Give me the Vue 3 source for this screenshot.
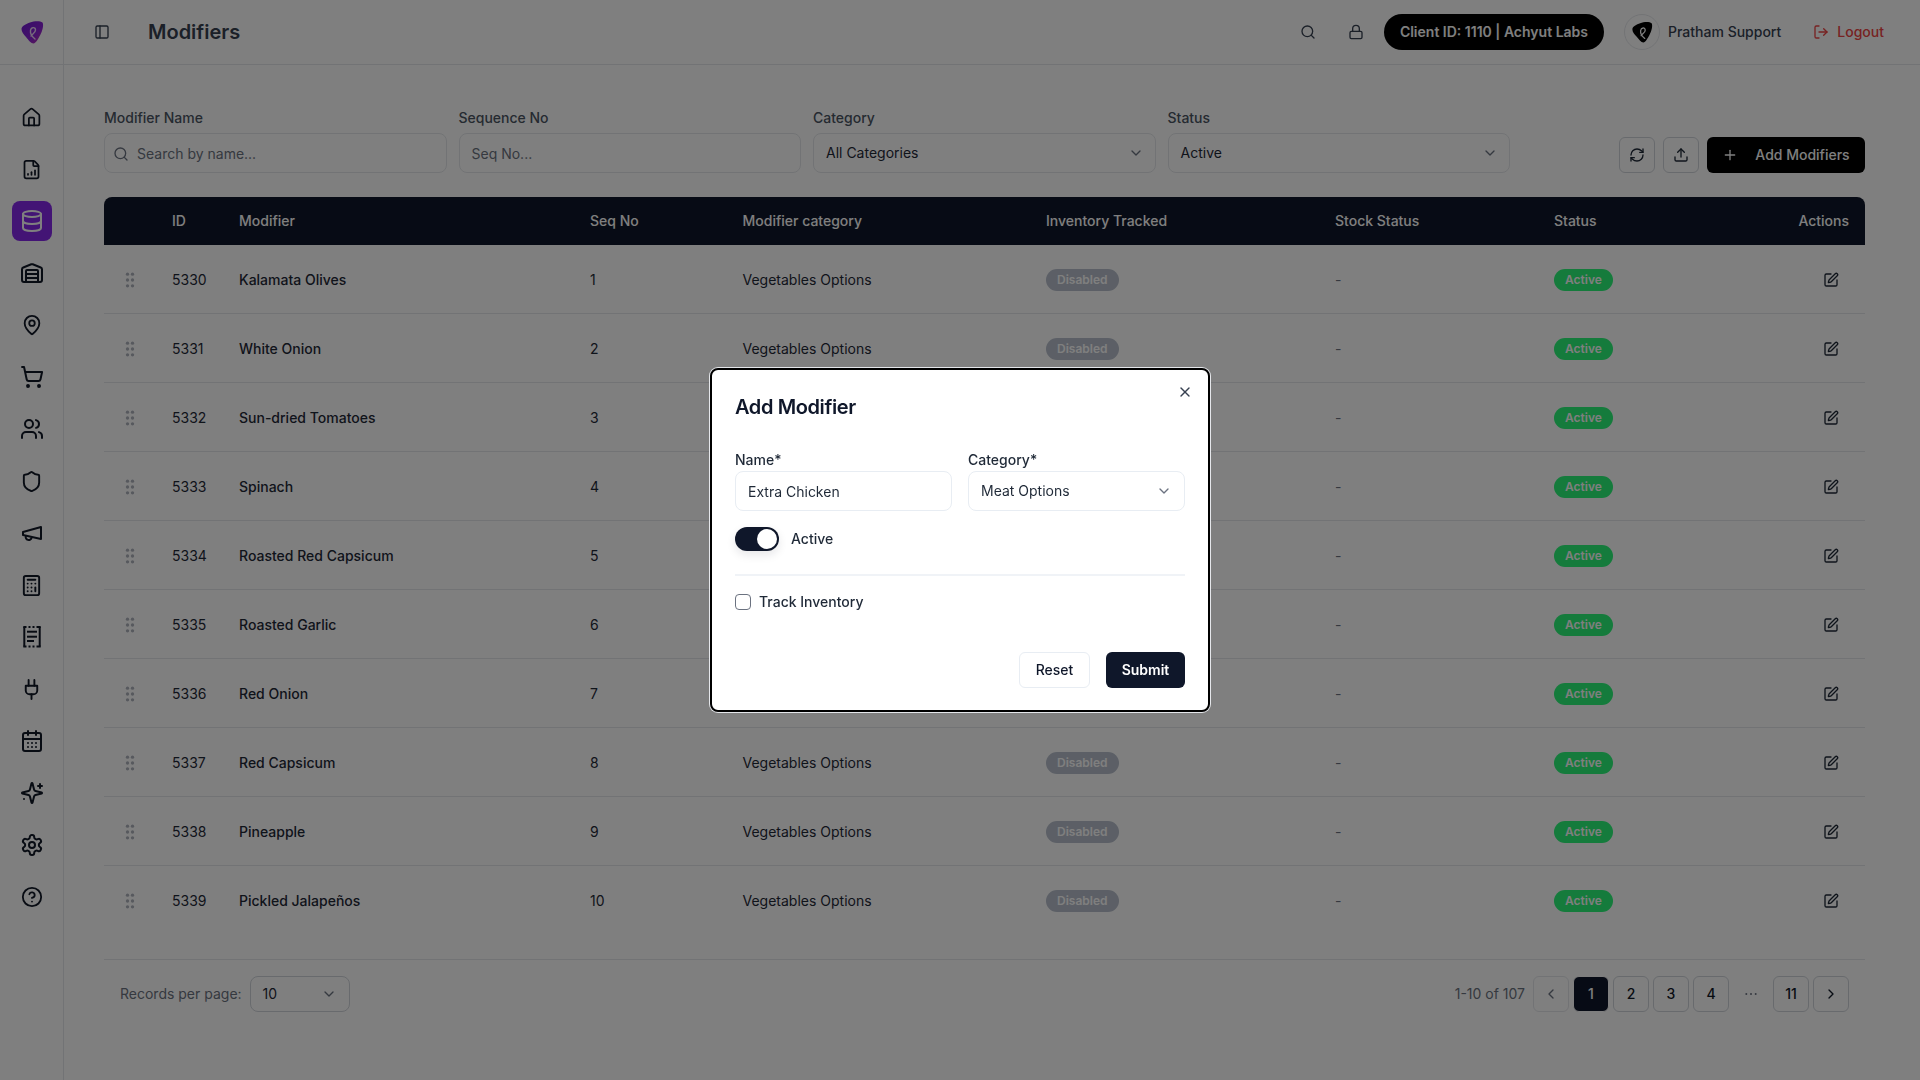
<script setup>
const navIcons = [
  { id: 'home', size: 21, paths: ['M15 21v-8a1 1 0 0 0-1-1h-4a1 1 0 0 0-1 1v8', 'M3 10a2 2 0 0 1 .709-1.528l7-5.999a2 2 0 0 1 2.582 0l7 5.999A2 2 0 0 1 21 10v9a2 2 0 0 1-2 2H5a2 2 0 0 1-2-2z'] },
  { id: 'report', size: 21, paths: ['M6 22a2 2 0 0 1-2-2V4a2 2 0 0 1 2-2h8a2.4 2.4 0 0 1 1.704.706l3.588 3.588A2.4 2.4 0 0 1 20 8v12a2 2 0 0 1-2 2z', 'M14 2v5a1 1 0 0 0 1 1h5', 'M8 18v-1', 'M12 18v-3', 'M16 18v-5'] },
  { id: 'database', size: 24, active: true, paths: ['M3 5a9 3 0 1 0 18 0a9 3 0 1 0-18 0', 'M3 5V19A9 3 0 0 0 21 19V5', 'M3 12A9 3 0 0 0 21 12'] },
  { id: 'warehouse', size: 24, paths: ['M18 21V10a1 1 0 0 0-1-1H7a1 1 0 0 0-1 1v11', 'M22 19a2 2 0 0 1-2 2H4a2 2 0 0 1-2-2V8.35a2 2 0 0 1 1.26-1.86l8-3.2a2 2 0 0 1 1.48 0l8 3.2A2 2 0 0 1 22 8.35z', 'M6 13h12', 'M6 17h12'] },
  { id: 'pin', size: 22, paths: ['M20 10c0 4.993-5.539 10.193-7.399 11.799a1 1 0 0 1-1.202 0C9.539 20.193 4 14.993 4 10a8 8 0 0 1 16 0', 'M9 10a3 3 0 1 0 6 0a3 3 0 1 0-6 0'] },
  { id: 'cart', size: 24, paths: ['M7 21a1 1 0 1 0 2 0a1 1 0 1 0-2 0', 'M18 21a1 1 0 1 0 2 0a1 1 0 1 0-2 0', 'M2.05 2.05h2l2.66 12.42a2 2 0 0 0 2 1.58h9.78a2 2 0 0 0 1.95-1.57l1.65-7.43H5.12'] },
  { id: 'users', size: 24, paths: ['M16 21v-2a4 4 0 0 0-4-4H6a4 4 0 0 0-4 4v2', 'M16 3.128a4 4 0 0 1 0 7.744', 'M22 21v-2a4 4 0 0 0-3-3.87', 'M5 7a4 4 0 1 0 8 0a4 4 0 1 0-8 0'] },
  { id: 'shield', size: 23, paths: ['M20 13c0 5-3.5 7.5-7.66 8.95a1 1 0 0 1-.67-.01C7.5 20.5 4 18 4 13V6a1 1 0 0 1 1-1c2 0 4.5-1.2 6.24-2.72a1.17 1.17 0 0 1 1.52 0C14.51 3.81 17 5 19 5a1 1 0 0 1 1 1z'] },
  { id: 'megaphone', size: 24, paths: ['M3 11l18-5v12L3 14v-3z', 'M11.6 16.8a3 3 0 1 1-5.8-1.6'] },
  { id: 'calculator', size: 23, paths: ['M6 2h12a2 2 0 0 1 2 2v16a2 2 0 0 1-2 2H6a2 2 0 0 1-2-2V4a2 2 0 0 1 2-2z', 'M8 6h8', 'M16 14v4', 'M16 10h.01', 'M12 10h.01', 'M8 10h.01', 'M12 14h.01', 'M8 14h.01', 'M12 18h.01', 'M8 18h.01'] },
  { id: 'receipt', size: 24, square: true, paths: ['M4.3 2v19.5', 'M19.7 2v19.5', 'M3.3 2h3.2M8.5 2h2M12.5 2h2M16.5 2h4.2', 'M3.3 21.5h3.2M8.5 21.5h2M12.5 21.5h2M16.5 21.5h4.2', 'M7 6.7h10', 'M7 11.7h10', 'M7 16h7'] },
  { id: 'plug', size: 23, paths: ['M12 22v-5', 'M9 8V2', 'M15 8V2', 'M18 8v5a4 4 0 0 1-4 4h-4a4 4 0 0 1-4-4V8Z'] },
  { id: 'calendar', size: 24, paths: ['M8 2v4', 'M16 2v4', 'M5 4h14a2 2 0 0 1 2 2v14a2 2 0 0 1-2 2H5a2 2 0 0 1-2-2V6a2 2 0 0 1 2-2z', 'M3 10h18', 'M8 14h.01', 'M12 14h.01', 'M16 14h.01', 'M8 18h.01', 'M12 18h.01', 'M16 18h.01'] },
  { id: 'sparkles', size: 24, paths: ['M9.937 15.5A2 2 0 0 0 8.5 14.063l-6.135-1.582a.5.5 0 0 1 0-.962L8.5 9.936A2 2 0 0 0 9.937 8.5l1.582-6.135a.5.5 0 0 1 .963 0L14.063 8.5A2 2 0 0 0 15.5 9.937l6.135 1.581a.5.5 0 0 1 0 .964L15.5 14.063a2 2 0 0 0-1.437 1.437l-1.582 6.135a.5.5 0 0 1-.963 0z', 'M20 3v4', 'M22 5h-4', 'M4 18h.01'] },
  { id: 'settings', size: 24, paths: ['M12.22 2h-.44a2 2 0 0 0-2 2v.18a2 2 0 0 1-1 1.73l-.43.25a2 2 0 0 1-2 0l-.15-.08a2 2 0 0 0-2.73.73l-.22.38a2 2 0 0 0 .73 2.73l.15.1a2 2 0 0 1 1 1.72v.51a2 2 0 0 1-1 1.74l-.15.09a2 2 0 0 0-.73 2.73l.22.38a2 2 0 0 0 2.73.73l.15-.08a2 2 0 0 1 2 0l.43.25a2 2 0 0 1 1 1.73V20a2 2 0 0 0 2 2h.44a2 2 0 0 0 2-2v-.18a2 2 0 0 1 1-1.73l.43-.25a2 2 0 0 1 2 0l.15.08a2 2 0 0 0 2.73-.73l.22-.39a2 2 0 0 0-.73-2.73l-.15-.08a2 2 0 0 1-1-1.74v-.5a2 2 0 0 1 1-1.74l.15-.09a2 2 0 0 0 .73-2.73l-.22-.38a2 2 0 0 0-2.73-.73l-.15.08a2 2 0 0 1-2 0l-.43-.25a2 2 0 0 1-1-1.73V4a2 2 0 0 0-2-2z', 'M9 12a3 3 0 1 0 6 0a3 3 0 1 0-6 0'] },
  { id: 'help', size: 22, paths: ['M2 12a10 10 0 1 0 20 0a10 10 0 1 0-20 0', 'M9.09 9a3 3 0 0 1 5.83 1c0 2-3 3-3 3', 'M12 17h.01'] },
]

const filters = [
  { label: 'Modifier Name', placeholder: 'Search by name...', search: true },
  { label: 'Sequence No', placeholder: 'Seq No...' },
  { label: 'Category', value: 'All Categories' },
  { label: 'Status', value: 'Active' },
]

const columns = ['', 'ID', 'Modifier', 'Seq No', 'Modifier category', 'Inventory Tracked', 'Stock Status', 'Status', 'Actions']

const names = [
  'Kalamata Olives', 'White Onion', 'Sun-dried Tomatoes', 'Spinach', 'Roasted Red Capsicum',
  'Roasted Garlic', 'Red Onion', 'Red Capsicum', 'Pineapple', 'Pickled Jalapeños',
]
const rows = names.map((name, i) => ({ id: 5330 + i, name, seq: i + 1 }))

const pages = ['1', '2', '3', '4', '...', '11']
const pickPath = 'M1.5 9C1.5 6 6 4 10 2.5C14 1 20 .5 22.5 2.5C24 5 22.5 11 20 15.5C18 19 16 23 13.5 23.5C11 23.5 8.5 20 6 17C3.5 14 1.5 12 1.5 9Z'
const loopPath = 'M15 19C12.5 17 10 14 10.5 10.5C11 7 15.5 6.5 15.5 10C15.5 13 12 14 11 16'
</script>

<template>
  <div class="page">
    <aside class="sidebar">
      <div class="logo-wrap">
        <svg viewBox="0 0 24 24" width="24" height="24">
          <defs>
            <linearGradient id="pickGrad" x1="0" y1="0" x2="1" y2="1">
              <stop offset="0" stop-color="#6f1ad0" />
              <stop offset="0.6" stop-color="#8a22d8" />
              <stop offset="1" stop-color="#c23aa6" />
            </linearGradient>
          </defs>
          <path :d="pickPath" fill="url(#pickGrad)" />
          <path :d="loopPath" fill="none" stroke="#ecd6f7" stroke-width="1.4" stroke-linecap="round" />
        </svg>
      </div>
      <nav class="nav">
        <a v-for="icon in navIcons" :key="icon.id" class="nav-item" :class="{ active: icon.active }">
          <svg :width="icon.size" :height="icon.size" viewBox="0 0 24 24" class="ic" :class="{ square: icon.square }">
            <path v-for="d in icon.paths" :key="d" :d="d" />
          </svg>
        </a>
      </nav>
    </aside>

    <div class="main">
      <header class="topbar">
        <button class="panel-btn">
          <svg width="16" height="16" viewBox="0 0 24 24" class="ic"><rect x="3" y="3" width="18" height="18" rx="2" /><path d="M9 3v18" /></svg>
        </button>
        <h1>Modifiers</h1>
        <div class="top-right">
          <button class="top-icon">
            <svg width="16" height="16" viewBox="0 0 24 24" class="ic"><circle cx="11" cy="11" r="8" /><path d="m21 21-4.3-4.3" /></svg>
          </button>
          <button class="top-icon lock">
            <svg width="16" height="16" viewBox="0 0 24 24" class="ic"><rect x="3" y="11" width="18" height="11" rx="2" /><path d="M7 11V7a5 5 0 0 1 10 0v4" /></svg>
          </button>
          <div class="client-pill">Client ID: 1110 | Achyut Labs</div>
          <div class="avatar">
            <svg viewBox="0 0 24 24" width="22" height="22">
              <path :d="pickPath" fill="#000" />
              <path :d="loopPath" fill="none" stroke="#fff" stroke-width="1.4" stroke-linecap="round" />
            </svg>
          </div>
          <span class="user-name">Pratham Support</span>
          <a class="logout">
            <svg width="16" height="16" viewBox="0 0 24 24" class="ic"><path d="M9 21H5a2 2 0 0 1-2-2V5a2 2 0 0 1 2-2h4" /><path d="m16 17 5-5-5-5" /><path d="M21 12H9" /></svg>
            Logout
          </a>
        </div>
      </header>

      <main class="content">
        <section class="filters">
          <div v-for="f in filters" :key="f.label" class="filter">
            <label>{{ f.label }}</label>
            <div v-if="f.placeholder" class="field" :class="{ 'with-icon': f.search }">
              <svg v-if="f.search" width="16" height="16" viewBox="0 0 24 24" class="ic search-ic"><circle cx="11" cy="11" r="8" /><path d="m21 21-4.3-4.3" /></svg>
              <span class="placeholder">{{ f.placeholder }}</span>
            </div>
            <div v-else class="field select">
              <span>{{ f.value }}</span>
              <svg width="16" height="16" viewBox="0 0 24 24" class="ic chevron"><path d="m6 9 6 6 6-6" /></svg>
            </div>
          </div>
          <div class="filter-actions">
            <button class="square-btn">
              <svg width="16" height="16" viewBox="0 0 24 24" class="ic"><path d="M3 12a9 9 0 0 1 9-9 9.75 9.75 0 0 1 6.74 2.74L21 8" /><path d="M21 3v5h-5" /><path d="M21 12a9 9 0 0 1-9 9 9.75 9.75 0 0 1-6.74-2.74L3 16" /><path d="M8 16H3v5" /></svg>
            </button>
            <button class="square-btn">
              <svg width="16" height="16" viewBox="0 0 24 24" class="ic"><path d="M21 15v4a2 2 0 0 1-2 2H5a2 2 0 0 1-2-2v-4" /><path d="m17 8-5-5-5 5" /><path d="M12 3v12" /></svg>
            </button>
            <button class="add-btn">
              <svg width="16" height="16" viewBox="0 0 24 24" class="ic"><path d="M5 12h14" /><path d="M12 5v14" /></svg>
              Add Modifiers
            </button>
          </div>
        </section>

        <table class="grid">
          <thead>
            <tr>
              <th v-for="c in columns" :key="c">{{ c }}</th>
            </tr>
          </thead>
          <tbody>
            <tr v-for="r in rows" :key="r.id">
              <td class="grip">
                <svg width="20" height="20" viewBox="0 0 24 24"><g fill="#aeb3bc"><circle cx="9" cy="5" r="2" /><circle cx="15" cy="5" r="2" /><circle cx="9" cy="12" r="2" /><circle cx="15" cy="12" r="2" /><circle cx="9" cy="19" r="2" /><circle cx="15" cy="19" r="2" /></g></svg>
              </td>
              <td>{{ r.id }}</td>
              <td class="name">{{ r.name }}</td>
              <td>{{ r.seq }}</td>
              <td>Vegetables Options</td>
              <td><span class="badge off">Disabled</span></td>
              <td class="dash">-</td>
              <td><span class="badge on">Active</span></td>
              <td class="edit">
                <svg width="16" height="16" viewBox="0 0 24 24" class="ic"><path d="M12 3H5a2 2 0 0 0-2 2v14a2 2 0 0 0 2 2h14a2 2 0 0 0 2-2v-7" /><path d="M18.375 2.625a1 1 0 0 1 3 3l-9.013 9.014a2 2 0 0 1-.853.505l-2.873.84a.5.5 0 0 1-.62-.62l.84-2.873a2 2 0 0 1 .506-.852z" /></svg>
              </td>
            </tr>
          </tbody>
        </table>

        <footer class="pager">
          <div class="per-page">
            <span>Records per page:</span>
            <div class="per-select">
              <span>10</span>
              <svg width="16" height="16" viewBox="0 0 24 24" class="ic chevron"><path d="m6 9 6 6 6-6" /></svg>
            </div>
          </div>
          <div class="page-links">
            <span class="range">1-10 of 107</span>
            <button class="pg prev">
              <svg width="16" height="16" viewBox="0 0 24 24" class="ic"><path d="m15 18-6-6 6-6" /></svg>
            </button>
            <template v-for="p in pages" :key="p">
              <span v-if="p === '...'" class="pg ellipsis">
                <svg width="16" height="16" viewBox="0 0 24 24"><g fill="#6b7280"><circle cx="5" cy="12" r="1.5" /><circle cx="12" cy="12" r="1.5" /><circle cx="19" cy="12" r="1.5" /></g></svg>
              </span>
              <button v-else class="pg" :class="{ current: p === '1' }">{{ p }}</button>
            </template>
            <button class="pg">
              <svg width="16" height="16" viewBox="0 0 24 24" class="ic"><path d="m9 18 6-6-6-6" /></svg>
            </button>
          </div>
        </footer>
      </main>
    </div>

    <div class="overlay">
      <div class="modal">
        <button class="close">
          <svg width="16" height="16" viewBox="0 0 24 24" class="ic"><path d="M18 6 6 18" /><path d="m6 6 12 12" /></svg>
        </button>
        <h2>Add Modifier</h2>
        <div class="form-row">
          <div class="form-col">
            <label>Name*</label>
            <div class="m-field">Extra Chicken</div>
          </div>
          <div class="form-col">
            <label>Category*</label>
            <div class="m-field m-select">
              <span>Meat Options</span>
              <svg width="16" height="16" viewBox="0 0 24 24" class="ic chevron"><path d="m6 9 6 6 6-6" /></svg>
            </div>
          </div>
        </div>
        <div class="toggle-row">
          <span class="toggle"><span class="knob"></span></span>
          <span>Active</span>
        </div>
        <div class="divider"></div>
        <div class="check-row">
          <span class="check"></span>
          <span>Track Inventory</span>
        </div>
        <div class="modal-actions">
          <button class="reset">Reset</button>
          <button class="submit">Submit</button>
        </div>
      </div>
    </div>
  </div>
</template>

<style scoped>
* {
  box-sizing: border-box;
}

.page {
  display: flex;
  height: 1080px;
  overflow: hidden;
  background: #fff;
  color: #1f2937;
  font-family: Inter, "Noto Sans", sans-serif;
  font-size: 14px;
  line-height: 20px;
}

button {
  font: inherit;
  background: none;
  border: none;
  padding: 0;
  color: inherit;
  display: inline-flex;
  align-items: center;
  justify-content: center;
}

.ic {
  fill: none;
  stroke: currentColor;
  stroke-width: 2;
  stroke-linecap: round;
  stroke-linejoin: round;
  flex: none;
}

.ic.square {
  stroke-linecap: butt;
  stroke-linejoin: miter;
}

.sidebar {
  width: 64px;
  flex: none;
  border-right: 1px solid #e5e7eb;
}

.logo-wrap {
  height: 65px;
  padding-bottom: 1px;
  display: flex;
  align-items: center;
  justify-content: center;
  border-bottom: 1px solid #e5e7eb;
}

.nav {
  display: flex;
  flex-direction: column;
  align-items: center;
  gap: 12px;
  padding-top: 32px;
}

.nav-item {
  width: 40px;
  height: 40px;
  display: flex;
  align-items: center;
  justify-content: center;
  border-radius: 8px;
  color: #111827;
}

.nav-item.active {
  background: #8629ea;
  color: #fff;
}

.main {
  flex: 1;
  min-width: 0;
  display: flex;
  flex-direction: column;
}

.topbar {
  height: 65px;
  flex: none;
  display: flex;
  align-items: center;
  padding: 0 36px 0 24px;
  border-bottom: 1px solid #e5e7eb;
}

.panel-btn {
  width: 28px;
  height: 28px;
  color: #374151;
  margin-right: 32px;
}

h1 {
  margin: 0;
  font-size: 20px;
  line-height: 28px;
  font-weight: 600;
  color: #374151;
}

.top-right {
  margin-left: auto;
  display: flex;
  align-items: center;
}

.top-icon {
  width: 36px;
  height: 36px;
  color: #374151;
}

.top-icon.lock {
  margin: 0 10px 0 12px;
}

.client-pill {
  height: 36px;
  padding: 0 16px;
  display: flex;
  align-items: center;
  border-radius: 18px;
  background: #000;
  color: #fff;
  font-weight: 600;
  white-space: nowrap;
}

.avatar {
  width: 36px;
  height: 36px;
  margin-left: 20px;
  display: flex;
  align-items: center;
  justify-content: center;
  border: 1px solid #e5e7eb;
  border-radius: 50%;
}

.user-name {
  margin-left: 8px;
  font-weight: 500;
  color: #374151;
}

.logout {
  margin-left: 32px;
  display: flex;
  align-items: center;
  gap: 8px;
  font-weight: 500;
  color: #ef4444;
}

.content {
  flex: 1;
  padding: 43px 55px 0 40px;
}

.filters {
  display: flex;
  align-items: flex-end;
  gap: 12px;
}

.filter {
  width: 342.5px;
  flex: none;
}

.filter label {
  display: block;
  height: 20px;
  margin-bottom: 5px;
  font-weight: 500;
  color: #4b5563;
}

.field {
  height: 40px;
  padding: 1px 12px 0;
  display: flex;
  align-items: center;
  border: 1px solid #e5e7eb;
  border-radius: 8px;
}

.field.with-icon {
  padding-left: 8px;
  gap: 8px;
}

.search-ic {
  color: #6b7280;
}

.placeholder {
  color: #6b7280;
}

.select {
  padding: 0 11px 0 12px;
  justify-content: space-between;
  color: #1f2937;
}

.chevron {
  color: #6b7280;
}

.filter-actions {
  margin-left: auto;
  display: flex;
  gap: 8px;
}

.square-btn {
  width: 36px;
  height: 36px;
  border: 1px solid #d1d5db;
  border-radius: 6px;
  color: #1f2937;
}

.add-btn {
  height: 36px;
  width: 158px;
  gap: 17px;
  border-radius: 6px;
  background: #000;
  color: #fff;
  font-weight: 500;
}

.grid {
  width: 100%;
  margin-top: 24px;
  table-layout: fixed;
  border-collapse: separate;
  border-spacing: 0;
}

th {
  height: 48px;
  padding: 0 16px;
  text-align: left;
  font-weight: 500;
  color: #fff;
  background: #0f172a;
}

th:nth-child(1) { width: 52px; }
th:nth-child(2) { width: 67px; }
th:nth-child(3) { width: 351px; }
th:nth-child(4) { width: 152.5px; }
th:nth-child(5) { width: 303.5px; }
th:nth-child(6) { width: 289px; }
th:nth-child(7) { width: 219px; }
th:nth-child(8) { width: 182px; }

th:first-child {
  border-top-left-radius: 8px;
}

th:last-child {
  border-top-right-radius: 8px;
  text-align: right;
}

td {
  height: 69px;
  padding: 1px 16px 0;
  color: #1f2937;
  border-bottom: 1px solid #e5e7eb;
}

tbody tr:last-child td {
  padding-top: 0;
  border-bottom: none;
}

.name {
  font-weight: 500;
}

td.grip {
  padding: 7px 0 0 16px;
}

tbody tr:last-child td.grip {
  padding: 6px 0 0 16px;
}

.dash {
  color: #6b7280;
}

td.edit {
  padding: 7px 26px 0 0;
  text-align: right;
  color: #1f2937;
}

tbody tr:last-child td.edit {
  padding: 6px 26px 0 0;
}

.badge {
  display: inline-block;
  height: 22px;
  padding: 2px 11px;
  border-radius: 11px;
  font-size: 12px;
  line-height: 18px;
  font-weight: 600;
  color: #fff;
}

.badge.off {
  background: #b8bfcc;
}

.badge.on {
  background: #2af678;
}

.pager {
  margin-top: 24px;
  padding: 16px;
  display: flex;
  justify-content: space-between;
  align-items: center;
  border-top: 1px solid #e5e7eb;
}

.per-page {
  display: flex;
  align-items: center;
  gap: 8px;
  color: #6b7280;
}

.per-select {
  width: 100px;
  height: 36px;
  padding: 0 12px;
  display: flex;
  align-items: center;
  justify-content: space-between;
  border: 1px solid #d1d5db;
  border-radius: 8px;
  color: #1f2937;
}

.page-links {
  display: flex;
  align-items: center;
  gap: 4px;
}

.range {
  margin-right: 4px;
  color: #6b7280;
}

.pg {
  width: 36px;
  height: 36px;
  display: inline-flex;
  align-items: center;
  justify-content: center;
  border: 1px solid #d1d5db;
  border-radius: 6px;
  font-weight: 500;
  color: #111827;
}

.pg.prev {
  color: #6b7280;
  border-color: #e5e7eb;
}

.pg.current {
  background: #0f172a;
  border-color: #fff;
  color: #fff;
}

.pg.ellipsis {
  border: none;
}

.overlay {
  position: fixed;
  inset: 0;
  display: flex;
  align-items: center;
  justify-content: center;
  background: rgba(0, 0, 0, 0.5);
}

.modal {
  position: relative;
  width: 500px;
  height: 344px;
  padding: 23px;
  background: #fff;
  border: 2px solid #000;
  border-radius: 8px;
  box-shadow: 0 0 0 1px #e5e7eb;
}

.close {
  position: absolute;
  top: 14px;
  right: 15px;
  color: #374151;
}

h2 {
  margin: 0 0 29px;
  font-size: 20px;
  line-height: 28px;
  font-weight: 600;
  letter-spacing: -0.02em;
  color: #0f172a;
}

.form-row {
  display: grid;
  grid-template-columns: 1fr 1fr;
  gap: 16px;
}

.form-col label {
  display: block;
  margin-bottom: 1px;
  font-weight: 500;
  color: #1f2937;
}

.m-field {
  height: 40px;
  padding: 1px 12px 0;
  display: flex;
  align-items: center;
  border: 1px solid #e8edf3;
  border-radius: 8px;
  color: #1f2937;
}

.m-select {
  justify-content: space-between;
  padding-top: 0;
}

.toggle-row {
  margin-top: 16px;
  height: 24px;
  display: flex;
  align-items: center;
  gap: 12px;
  font-weight: 500;
}

.toggle {
  width: 44px;
  height: 24px;
  padding: 2px;
  display: flex;
  justify-content: flex-end;
  border-radius: 12px;
  background: #0f172a;
  box-shadow: 0 4px 10px rgba(15, 23, 42, 0.1);
}

.knob {
  width: 20px;
  height: 20px;
  border-radius: 50%;
  background: #fff;
}

.divider {
  height: 2px;
  margin-top: 23px;
  background: #f0f3f7;
}

.check-row {
  margin-top: 18px;
  display: flex;
  align-items: center;
  gap: 8px;
  height: 16px;
  font-weight: 500;
}

.check {
  width: 16px;
  height: 16px;
  border: 1px solid #6b7280;
  border-radius: 4px;
}

.modal-actions {
  margin-top: 42px;
  display: flex;
  justify-content: flex-end;
  gap: 16px;
}

.reset,
.submit {
  height: 36px;
  border-radius: 6px;
}

.reset {
  width: 71px;
  border: 1px solid #e8edf3;
  font-weight: 500;
  color: #0f172a;
}

.submit {
  width: 79px;
  background: #0f172a;
  color: #fff;
  font-weight: 600;
}
</style>
